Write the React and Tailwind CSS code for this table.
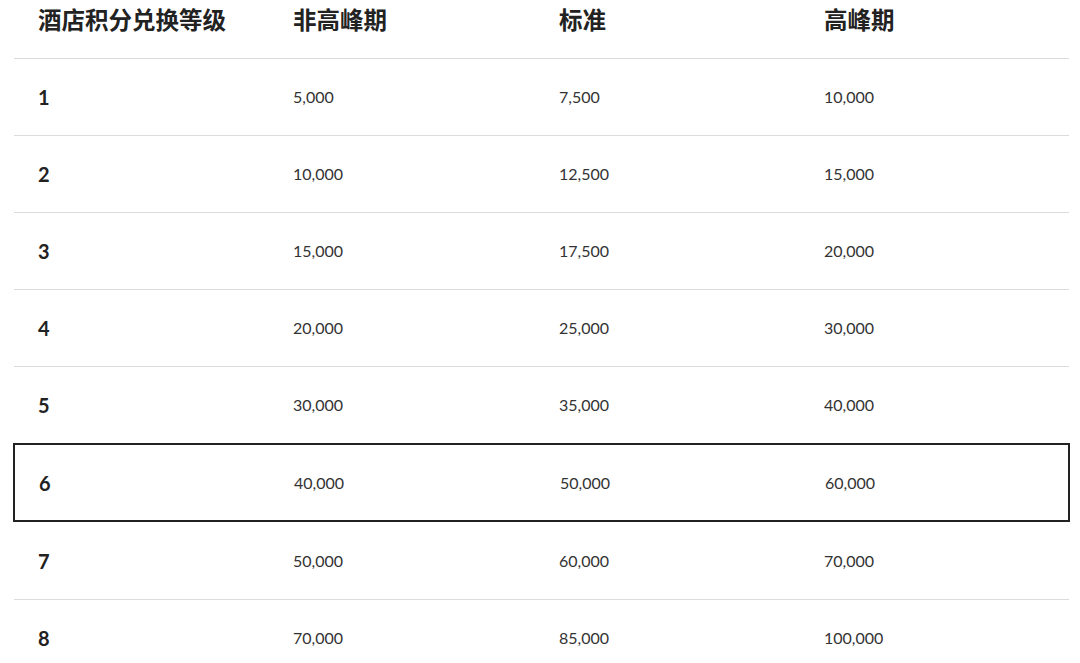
const rows = [
  ['1', '5,000', '7,500', '10,000'],
  ['2', '10,000', '12,500', '15,000'],
  ['3', '15,000', '17,500', '20,000'],
  ['4', '20,000', '25,000', '30,000'],
  ['5', '30,000', '35,000', '40,000'],
  ['6', '40,000', '50,000', '60,000'],
  ['7', '50,000', '60,000', '70,000'],
  ['8', '70,000', '85,000', '100,000'],
]

const HIGHLIGHT = '6'
const grid = 'grid grid-cols-[255px_266px_265px_1fr] items-center'

export default function App() {
  return (
    <div className="bg-white min-h-screen overflow-hidden" style={{ height: 663 }}>
      <div className="ml-[14px] w-[1055px] text-[#222]" style={{ fontFamily: 'Lato, "Noto Sans CJK SC", sans-serif' }}>
        <div className={`${grid} h-[58px] items-start pt-[4px]`}>
          {['酒店积分兑换等级', '非高峰期', '标准', '高峰期'].map((h) => (
            <div key={h} className="pl-6 text-[23.5px] leading-8 font-bold">{h}</div>
          ))}
        </div>

        {rows.map((r, i) => {
          const hl = r[0] === HIGHLIGHT
          const afterHl = i > 0 && rows[i - 1][0] === HIGHLIGHT
          let cls = 'h-[77px] border-t border-[#dcdcdc]'
          if (hl) cls = 'h-[79px] border-2 border-[#222] -mx-px'
          else if (afterHl) cls = 'h-[77px]'
          return (
            <div key={r[0]} className={`${grid} ${cls}`}>
              <div className="pl-6 text-[20px] font-bold">{r[0]}</div>
              {r.slice(1).map((v, j) => (
                <div key={j} className="pl-6 text-[16px] text-[#333]">{v}</div>
              ))}
            </div>
          )
        })}
      </div>
    </div>
  )
}
